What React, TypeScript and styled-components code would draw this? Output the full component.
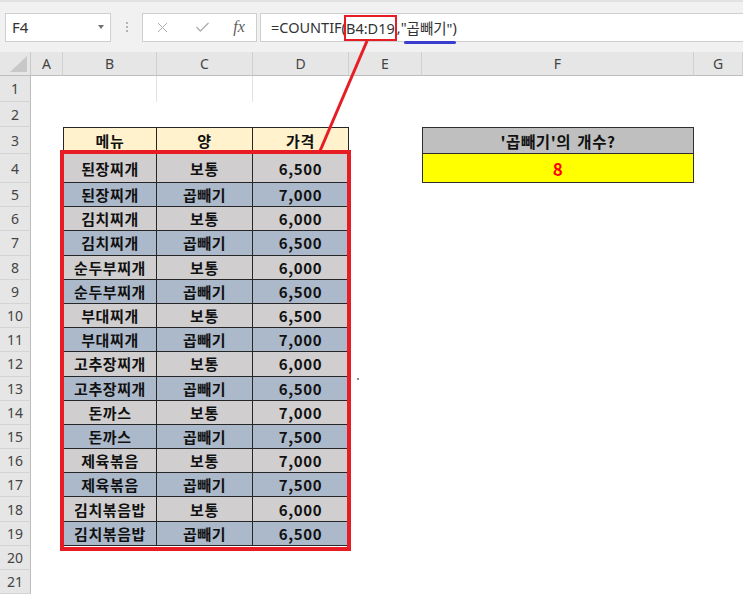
import React from 'react';
import styled, { createGlobalStyle } from 'styled-components';
import { X, Check } from 'lucide-react';

const GlobalStyle = createGlobalStyle`
  html, body {
    margin: 0;
    padding: 0;
    background: #ffffff;
  }
  body {
    font-family: "Noto Sans", "Noto Sans CJK KR", sans-serif;
    overflow: hidden;
  }
`;

const COLS = ['A', 'B', 'C', 'D', 'E', 'F', 'G'];
const COL_WIDTHS = [31, 32, 94, 96, 96, 73, 272, 49];
const ROW_HEIGHTS = [26, 25, 27, 29, ...Array(17).fill(24.2)];

const MENU = [
  ['된장찌개', '보통', '6,500'],
  ['된장찌개', '곱빼기', '7,000'],
  ['김치찌개', '보통', '6,000'],
  ['김치찌개', '곱빼기', '6,500'],
  ['순두부찌개', '보통', '6,000'],
  ['순두부찌개', '곱빼기', '6,500'],
  ['부대찌개', '보통', '6,500'],
  ['부대찌개', '곱빼기', '7,000'],
  ['고추장찌개', '보통', '6,000'],
  ['고추장찌개', '곱빼기', '6,500'],
  ['돈까스', '보통', '7,000'],
  ['돈까스', '곱빼기', '7,500'],
  ['제육볶음', '보통', '7,000'],
  ['제육볶음', '곱빼기', '7,500'],
  ['김치볶음밥', '보통', '6,000'],
  ['김치볶음밥', '곱빼기', '6,500'],
];

const Page = styled.div`
  position: relative;
  width: 743px;
  height: 597px;
  overflow: hidden;
  background: #fff;
`;

const FormulaBar = styled.div`
  height: 52px;
  box-sizing: border-box;
  display: flex;
  align-items: center;
  padding-left: 5px;
  background: #f1f1f1;
  border-top: 2px solid #e2e2e2;
`;

const NameBox = styled.div`
  width: 106px;
  height: 29px;
  box-sizing: border-box;
  display: flex;
  align-items: center;
  justify-content: space-between;
  padding: 0 6px 0 6px;
  background: #fff;
  border: 1px solid #cfcfcf;
  font-size: 15px;
  color: #333;
`;

const DropArrow = styled.span`
  width: 0;
  height: 0;
  border-left: 3px solid transparent;
  border-right: 3px solid transparent;
  border-top: 4px solid #707070;
`;

const Grip = styled.div`
  width: 31px;
  display: flex;
  flex-direction: column;
  align-items: center;
  gap: 2px;
  span {
    width: 2px;
    height: 2px;
    background: #b4b4b4;
  }
`;

const FxBox = styled.div`
  width: 115px;
  height: 29px;
  box-sizing: border-box;
  display: flex;
  align-items: center;
  justify-content: space-around;
  background: #fff;
  border: 1px solid #cfcfcf;
  color: #ababab;
`;

const FxLabel = styled.span`
  font-family: "Liberation Serif", "DejaVu Serif", serif;
  font-style: italic;
  font-size: 16px;
  color: #5e5e5e;
`;

const FormulaInput = styled.div`
  flex: 1;
  height: 29px;
  box-sizing: border-box;
  margin-left: 3px;
  display: flex;
  align-items: center;
  padding-left: 10px;
  background: #fff;
  border: 1px solid #cfcfcf;
  border-right: none;
  font-size: 14.5px;
  color: #333;
  white-space: pre;
`;

const RangeRef = styled.span`
  display: inline-block;
  height: 26px;
  line-height: 23px;
  margin-top: 1px;
  margin-left: -2px;
  box-sizing: border-box;
  border: 2px solid #e81c24;
  padding: 0 0 0 0;
`;

const Underlined = styled.span`
  position: relative;
  &::after {
    content: "";
    position: absolute;
    left: -3px;
    right: -3px;
    bottom: -6px;
    height: 3px;
    border-radius: 2px;
    background: #3a3ecf;
  }
`;

const Sheet = styled.div`
  display: grid;
  grid-template-columns: ${COL_WIDTHS.map((w) => `${w}px`).join(' ')};
  grid-template-rows: 24px ${ROW_HEIGHTS.map((h) => `${h}px`).join(' ')};
`;

const Corner = styled.div`
  position: relative;
  background: #e6e6e6;
  border-right: 1px solid #c9c9c9;
  border-bottom: 1px solid #bdbdbd;
  box-sizing: border-box;
  &::after {
    content: "";
    position: absolute;
    right: 3px;
    bottom: 3px;
    width: 17px;
    height: 16px;
    background: #c8c8c8;
    clip-path: polygon(100% 0, 100% 100%, 0 100%);
  }
`;

const ColHead = styled.div`
  display: flex;
  align-items: center;
  justify-content: center;
  box-sizing: border-box;
  background: #e6e6e6;
  border-right: 1px solid #d0d0d0;
  border-bottom: 1px solid #bdbdbd;
  font-size: 14px;
  color: #444;
`;

const RowHead = styled.div`
  display: flex;
  align-items: center;
  justify-content: center;
  box-sizing: border-box;
  background: #e6e6e6;
  border-right: 1px solid #bdbdbd;
  border-bottom: 1px solid #d4d4d4;
  font-size: 14px;
  color: #444;
`;

const Blank = styled.div<{ $line?: boolean }>`
  box-sizing: border-box;
  border-right: ${(p) => (p.$line ? '1px solid #e2e2e2' : 'none')};
`;

const TableCell = styled.div<{ $bg: string; $left?: boolean; $top?: boolean }>`
  display: flex;
  align-items: center;
  justify-content: center;
  box-sizing: border-box;
  background: ${(p) => p.$bg};
  border-right: 1px solid #262626;
  border-bottom: 1px solid #262626;
  border-left: ${(p) => (p.$left ? '1px solid #262626' : 'none')};
  border-top: ${(p) => (p.$top ? '1px solid #262626' : 'none')};
  font-family: "Noto Sans CJK KR", "Noto Sans", sans-serif;
  font-weight: 700;
  font-size: 15px;
  letter-spacing: 0.6px;
  color: #111;
`;

const AskCell = styled.div<{ $bg: string; $color: string; $size: number; $top?: boolean }>`
  display: flex;
  align-items: center;
  justify-content: center;
  box-sizing: border-box;
  background: ${(p) => p.$bg};
  border: 1px solid #2e2e2e;
  border-top: ${(p) => (p.$top ? '1px solid #2e2e2e' : 'none')};
  font-family: "Noto Sans CJK KR", "Noto Sans", sans-serif;
  font-weight: 700;
  font-size: ${(p) => p.$size}px;
  letter-spacing: 0.6px;
  word-spacing: 2px;
  color: ${(p) => p.$color};
`;

const RangeFrame = styled.div`
  position: absolute;
  left: 60px;
  top: 150px;
  width: 291px;
  height: 401px;
  box-sizing: border-box;
  border: 4px solid #e81c24;
  pointer-events: none;
`;

const Connector = styled.svg`
  position: absolute;
  left: 0;
  top: 0;
  pointer-events: none;
`;

const Speck = styled.div`
  position: absolute;
  left: 357px;
  top: 378px;
  width: 2px;
  height: 2px;
  background: #8a8a8a;
`;

const GRAY = '#d0cece';
const BLUE = '#acb9ca';

function renderRow(row: number) {
  const cells: React.ReactNode[] = [<RowHead key="h">{row}</RowHead>];
  const cols = COLS.map((c) => {
    if (row === 3 && (c === 'B' || c === 'C' || c === 'D')) {
      const label = c === 'B' ? '메뉴' : c === 'C' ? '양' : '가격';
      return (
        <TableCell key={c} $bg="#fff2cc" $left={c === 'B'} $top>
          {label}
        </TableCell>
      );
    }
    if (row >= 4 && row <= 19 && (c === 'B' || c === 'C' || c === 'D')) {
      const item = MENU[row - 4];
      const idx = c === 'B' ? 0 : c === 'C' ? 1 : 2;
      return (
        <TableCell key={c} $bg={item[1] === '보통' ? GRAY : BLUE} $left={c === 'B'}>
          {item[idx]}
        </TableCell>
      );
    }
    if (row === 3 && c === 'F') {
      return (
        <AskCell key={c} $bg="#bfbfbf" $color="#111" $size={15.5} $top>
          '곱빼기'의 개수?
        </AskCell>
      );
    }
    if (row === 4 && c === 'F') {
      return (
        <AskCell key={c} $bg="#ffff00" $color="#ff0000" $size={17}>
          8
        </AskCell>
      );
    }
    return <Blank key={c} $line={row === 1 && (c === 'B' || c === 'C')} />;
  });
  return cells.concat(cols);
}

export default function App() {
  return (
    <Page>
      <GlobalStyle />
      <FormulaBar>
        <NameBox>
          F4
          <DropArrow />
        </NameBox>
        <Grip>
          <span />
          <span />
          <span />
        </Grip>
        <FxBox>
          <X size={17} strokeWidth={1.4} />
          <Check size={17} strokeWidth={1.8} />
          <FxLabel>fx</FxLabel>
        </FxBox>
        <FormulaInput>
          =COUNTIF(<RangeRef>B4:D19</RangeRef>,"<Underlined>곱빼기"</Underlined>)
        </FormulaInput>
      </FormulaBar>
      <Sheet>
        <Corner />
        {COLS.map((c) => (
          <ColHead key={c}>{c}</ColHead>
        ))}
        {ROW_HEIGHTS.map((_, i) => (
          <React.Fragment key={i}>{renderRow(i + 1)}</React.Fragment>
        ))}
      </Sheet>
      <RangeFrame />
      <Connector width="743" height="597" viewBox="0 0 743 597">
        <line x1="367" y1="41" x2="320" y2="151" stroke="#e81c24" strokeWidth="3" />
      </Connector>
      <Speck />
    </Page>
  );
}
